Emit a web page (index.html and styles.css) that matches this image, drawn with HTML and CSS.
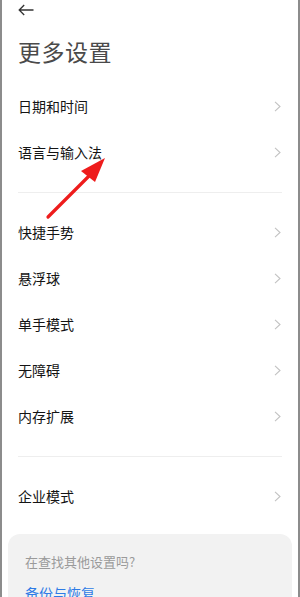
FILE: index.html
```html
<!DOCTYPE html>
<html lang="zh-CN">
<head>
<meta charset="utf-8">
<link rel="stylesheet" href="styles.css">
</head>
<body>
<div class="page">
  <div class="topbar">
    <svg class="back" width="16" height="12" viewBox="0 0 16 12"><path d="M15.5 6H1.2M6.2 1L1.2 6l5 5" fill="none" stroke="#333" stroke-width="1.3"/></svg>
  </div>
  <h1 class="title">更多设置</h1>
  <div class="group">
    <div class="row"><span>日期和时间</span><svg class="chev" width="7" height="11" viewBox="0 0 7 11"><path d="M1 0.8l5 4.7-5 4.7" fill="none" stroke="#c2c2c2" stroke-width="1.1"/></svg></div>
    <div class="row"><span>语言与输入法</span><svg class="chev" width="7" height="11" viewBox="0 0 7 11"><path d="M1 0.8l5 4.7-5 4.7" fill="none" stroke="#c2c2c2" stroke-width="1.1"/></svg></div>
  </div>
  <div class="divider"></div>
  <div class="group">
    <div class="row"><span>快捷手势</span><svg class="chev" width="7" height="11" viewBox="0 0 7 11"><path d="M1 0.8l5 4.7-5 4.7" fill="none" stroke="#c2c2c2" stroke-width="1.1"/></svg></div>
    <div class="row"><span>悬浮球</span><svg class="chev" width="7" height="11" viewBox="0 0 7 11"><path d="M1 0.8l5 4.7-5 4.7" fill="none" stroke="#c2c2c2" stroke-width="1.1"/></svg></div>
    <div class="row"><span>单手模式</span><svg class="chev" width="7" height="11" viewBox="0 0 7 11"><path d="M1 0.8l5 4.7-5 4.7" fill="none" stroke="#c2c2c2" stroke-width="1.1"/></svg></div>
    <div class="row"><span>无障碍</span><svg class="chev" width="7" height="11" viewBox="0 0 7 11"><path d="M1 0.8l5 4.7-5 4.7" fill="none" stroke="#c2c2c2" stroke-width="1.1"/></svg></div>
    <div class="row"><span>内存扩展</span><svg class="chev" width="7" height="11" viewBox="0 0 7 11"><path d="M1 0.8l5 4.7-5 4.7" fill="none" stroke="#c2c2c2" stroke-width="1.1"/></svg></div>
  </div>
  <div class="divider"></div>
  <div class="group">
    <div class="row"><span>企业模式</span><svg class="chev" width="7" height="11" viewBox="0 0 7 11"><path d="M1 0.8l5 4.7-5 4.7" fill="none" stroke="#c2c2c2" stroke-width="1.1"/></svg></div>
  </div>
  <div class="card">
    <p class="card-q">在查找其他设置吗?</p>
    <p class="card-link">备份与恢复</p>
  </div>
  <svg class="pointer" width="300" height="597" viewBox="0 0 300 597">
    <path d="M48 217L93 172" stroke="#ee1c1c" stroke-width="3.2" stroke-linecap="round" fill="none"/>
    <path d="M105 158L81 171L95 182Z" fill="#ee1c1c"/>
  </svg>
</div>
</body>
</html>
```
FILE: styles.css
```css
html, body {
  margin: 0;
  padding: 0;
  background: #fff;
}
body {
  font-family: "Noto Sans CJK SC", "Noto Sans", sans-serif;
}
.page {
  position: relative;
  width: 300px;
  height: 597px;
  box-sizing: border-box;
  border-left: 2px solid #8c8c8c;
  border-right: 2px solid #8c8c8c;
  padding: 0 16px;
  overflow: hidden;
}
.topbar {
  height: 20px;
  display: flex;
  align-items: center;
}
.back {
  display: block;
}
.title {
  margin: 15px 0 0;
  font-size: 23px;
  line-height: 32px;
  font-weight: 400;
  color: #4a4a4a;
  letter-spacing: 0.5px;
  height: 48px;
}
.row {
  height: 46px;
  display: flex;
  align-items: center;
  justify-content: space-between;
  font-size: 14px;
  color: #141414;
  padding-right: 1px;
}
.chev {
  display: block;
}
.divider {
  height: 1px;
  background: #eeeeee;
  margin: 17px 0 16px;
}
.card {
  margin: 15px -10px 0;
  background: #f2f2f2;
  border-radius: 12px;
  padding: 18px 17px;
}
.card-q {
  margin: 0;
  font-size: 13px;
  line-height: 20px;
  color: #9a9a9a;
}
.card-link {
  margin: 11px 0 0;
  font-size: 14px;
  line-height: 20px;
  color: #2e7be6;
}
.pointer {
  position: absolute;
  left: -2px;
  top: 0;
  pointer-events: none;
}
```
